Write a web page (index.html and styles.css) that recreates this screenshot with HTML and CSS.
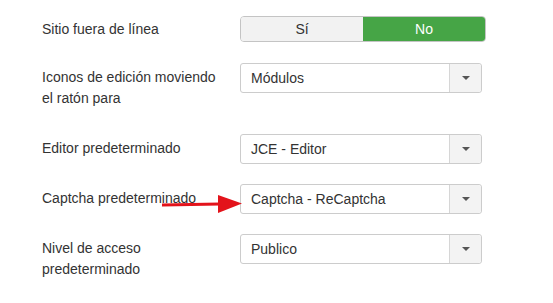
FILE: index.html
```html
<!DOCTYPE html>
<html lang="es">
<head>
  <meta charset="UTF-8">
  <title>Configuración global</title>
  <link rel="stylesheet" href="styles.css">
</head>
<body>
  <div class="form">
    <div class="row row-first">
      <label class="label">Sitio fuera de línea</label>
      <div class="toggle">
        <button class="toggle-btn">Sí</button>
        <button class="toggle-btn active">No</button>
      </div>
    </div>

    <div class="row row-tall">
      <label class="label">Iconos de edición moviendo el ratón para</label>
      <div class="select">
        <span class="select-value">Módulos</span>
        <span class="select-caret"></span>
      </div>
    </div>

    <div class="row">
      <label class="label">Editor predeterminado</label>
      <div class="select">
        <span class="select-value">JCE - Editor</span>
        <span class="select-caret"></span>
      </div>
    </div>

    <div class="row">
      <label class="label">Captcha predeterminado</label>
      <div class="select">
        <span class="select-value">Captcha - ReCaptcha</span>
        <span class="select-caret"></span>
      </div>
      <svg class="arrow" width="82" height="20" viewBox="0 0 82 20">
        <path d="M0 11 L58 10" stroke="#e3131b" stroke-width="3" fill="none"/>
        <polygon points="56,1 80,9.5 56,19" fill="#e3131b"/>
      </svg>
    </div>

    <div class="row">
      <label class="label">Nivel de acceso predeterminado</label>
      <div class="select">
        <span class="select-value">Publico</span>
        <span class="select-caret"></span>
      </div>
    </div>
  </div>
</body>
</html>
```

FILE: styles.css
```css
body {
  margin: 0;
  background-color: #fff;
  font-family: "Liberation Sans", Arial, sans-serif;
  font-size: 14px;
  color: #333;
}
.form {
  padding: 16px 0 0 42px;
}
.row {
  position: relative;
  display: flex;
  align-items: flex-start;
  margin-bottom: 20px;
}
.row-first {
  margin-bottom: 21px;
}
.row-tall {
  margin-bottom: 25px;
}
.label {
  width: 198px;
  padding-top: 4px;
  line-height: 21px;
  padding-right: 20px;
  box-sizing: border-box;
}
.row-first .label {
  padding-top: 3px;
}
.toggle {
  display: flex;
  width: 246px;
  height: 26px;
  border: 1px solid #c4c4c4;
  border-radius: 4px;
  box-sizing: border-box;
  overflow: hidden;
}
.toggle-btn {
  flex: 1;
  border: none;
  margin: 0;
  padding: 0;
  background-color: #f2f2f2;
  font-family: inherit;
  font-size: 14px;
  color: #333;
}
.toggle-btn.active {
  background-color: #46a546;
  color: #fff;
}
.select {
  display: flex;
  width: 242px;
  height: 30px;
  border: 1px solid #ccc;
  border-radius: 3px;
  box-sizing: border-box;
}
.select-value {
  flex: 1;
  padding-left: 10px;
  line-height: 28px;
}
.select-caret {
  width: 31px;
  background-color: #f3f3f3;
  border-left: 1px solid #d6d6d6;
  border-radius: 0 3px 3px 0;
  display: flex;
  align-items: center;
  justify-content: center;
}
.select-caret::after {
  content: "";
  border-left: 4px solid transparent;
  border-right: 4px solid transparent;
  border-top: 4px solid #555;
}
.arrow {
  position: absolute;
  left: 120px;
  top: 10px;
}
```
